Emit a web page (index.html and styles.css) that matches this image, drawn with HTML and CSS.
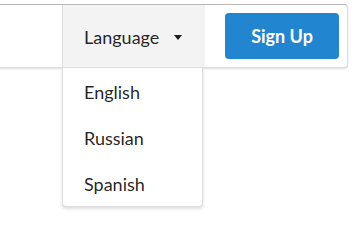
FILE: index.html
```html
<!DOCTYPE html>
<html lang="en">

<head>
  <meta charset="UTF-8">
  <title>Menu</title>
  <link rel="stylesheet" href="styles.css">
</head>

<body>

  <div class="page">
    <!-- Top menu -->
    <div class="menu">
      <div class="item lang">
        <span class="text">Language</span>
        <span class="caret"></span>

        <!-- Open language list -->
        <div class="lang-list">
          <div class="lang-option">English</div>
          <div class="lang-option">Russian</div>
          <div class="lang-option">Spanish</div>
        </div>
      </div>
      <div class="item button-item">
        <button class="button primary">Sign Up</button>
      </div>
    </div>
  </div>

</body>

</html>
```

FILE: styles.css
```css
/* Base */

html,
body {
  min-height: 248px;
}

body {
  margin: 0;
  padding: 0;
  background-color: #fff;
  font-family: Lato, "Open Sans", Arial, sans-serif;
  color: rgba(0, 0, 0, 0.87);
}

.page {
  padding-top: 4px;
  padding-right: 13px;
}

/* Menu */
.menu {
  display: flex;
  justify-content: flex-end;
  margin-left: -10px;
  height: 62px;
  background-color: #fff;
  border: 1px solid rgba(34, 36, 38, 0.15);
  border-top-color: #b9b9ba;
  border-radius: 0 4px 4px 0;
  box-shadow: 0 1px 2px 0 rgba(34, 36, 38, 0.15);
}

.item {
  display: flex;
  align-items: center;
  position: relative;
  font-size: 18px;
  line-height: 1;
}

.lang {
  width: 120px;
  padding: 2px 0 0 21px;
  background-color: #f3f3f3;
  border-left: 1px solid rgba(34, 36, 38, 0.1);
}

.caret {
  margin-left: 15px;
  width: 0;
  height: 0;
  border-left: 4.5px solid transparent;
  border-right: 4.5px solid transparent;
  border-top: 5px solid #1b1b1b;
}

.button-item {
  padding: 0 8px 0 20px;
  border-left: 1px solid rgba(34, 36, 38, 0.05);
}

.button {
  font-family: inherit;
  font-size: 18px;
  font-weight: 700;
  line-height: 1;
  height: 46px;
  width: 114px;
  padding: 0;
  border: none;
  border-radius: 4px;
  cursor: pointer;
}

.button.primary {
  background-color: #2185d0;
  color: #fff;
}

/* Language list */
.lang-list {
  display: block;
  position: absolute;
  top: 63px;
  left: -1px;
  width: 139px;
  background-color: #fff;
  border: 1px solid rgba(34, 36, 38, 0.15);
  border-top: none;
  border-radius: 0 0 4px 4px;
  box-shadow: 0 2px 3px 0 rgba(34, 36, 38, 0.15);
  z-index: 10;
}

.lang-option {
  padding: 15px 21px 13px;
  font-size: 18px;
  line-height: 18px;
}
```
